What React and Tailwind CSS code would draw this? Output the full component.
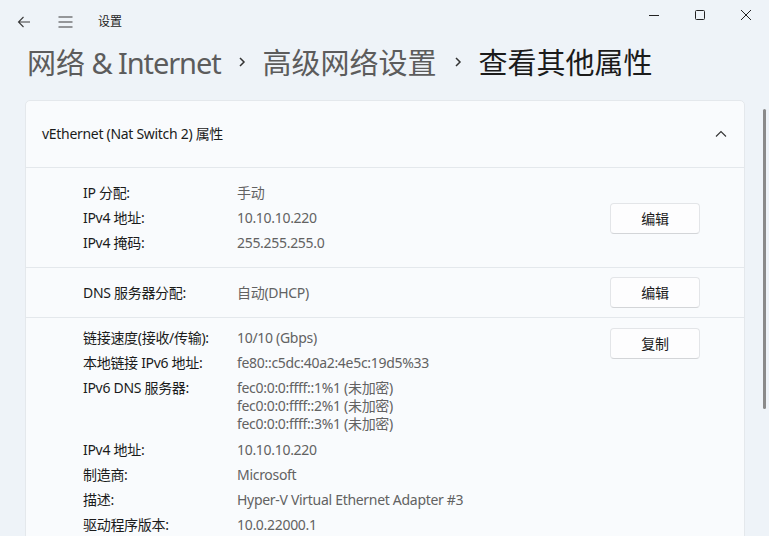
import React from "react";

const font = { fontFamily: '"Noto Sans", "Noto Sans CJK SC", sans-serif' };

function Btn({ children }) {
  return (
    <button className="w-[90px] h-[31px] rounded-[4px] border border-[#e3e5e8] border-b-[#d3d5d8] bg-[#fdfdfe] text-[14px] text-[#1b1b1b] leading-none">
      {children}
    </button>
  );
}

function Row({ label, children, className = "" }) {
  return (
    <div className={"flex " + className}>
      <div className="w-[154px] text-[#1b1b1b]">{label}</div>
      <div className="text-[#626262]">{children}</div>
    </div>
  );
}

function Chevron() {
  return (
    <svg className="mx-[16px]" width="10" height="14" viewBox="0 0 10 14" fill="none" stroke="#333" strokeWidth="1.5">
      <path d="M3 3l4 4-4 4" />
    </svg>
  );
}

export default function App() {
  return (
    <div className="relative w-[769px] h-[536px] overflow-hidden bg-[#eef3f8]" style={font}>
      {/* title bar */}
      <div className="flex items-center h-[44px]">
        <div className="w-[46px] flex justify-center pl-[1px]">
          <svg width="14" height="12" viewBox="0 0 14 12" fill="none" stroke="#3a3a3a" strokeWidth="1.1">
            <path d="M13 6H1.5M6.5 1L1.5 6l5 5" />
          </svg>
        </div>
        <div className="w-[38px] flex justify-center">
          <svg width="15" height="12" viewBox="0 0 15 12" fill="none" stroke="#3a3a3a" strokeWidth="1.1">
            <path d="M0.5 1h14M0.5 6h14M0.5 11h14" />
          </svg>
        </div>
        <div className="ml-[14px] text-[12px] text-[#1b1b1b] mt-[-1px]">设置</div>
        <div className="ml-auto flex items-center self-start h-[30px]">
          <div className="w-[46px] flex justify-center">
            <svg width="10" height="10" viewBox="0 0 10 10" stroke="#222" strokeWidth="1"><path d="M0 5.5h10" /></svg>
          </div>
          <div className="w-[46px] flex justify-center">
            <svg width="10" height="10" viewBox="0 0 10 10" fill="none" stroke="#222" strokeWidth="1"><rect x="0.5" y="0.5" width="9" height="9" rx="1" /></svg>
          </div>
          <div className="w-[46px] flex justify-center">
            <svg width="10" height="10" viewBox="0 0 10 10" stroke="#222" strokeWidth="1"><path d="M0 0l10 10M10 0L0 10" /></svg>
          </div>
        </div>
      </div>

      {/* breadcrumb */}
      <div className="flex items-center h-[36px] pl-[27px] text-[29px] leading-none text-[#5c5c5c]">
        <span>网络<span className="tracking-[-1.1px]"> &amp; Internet</span></span>
        <Chevron />
        <span>高级网络设置</span>
        <Chevron />
        <span className="text-[#1b1b1b]">查看其他属性</span>
      </div>

      {/* card */}
      <div className="ml-[25px] mr-[24px] mt-[20px] rounded-[5px] border border-[#e4e8ec] bg-[#f9fbfd] text-[14px] leading-[18px] tracking-[-0.3px]">
        <div className="flex items-center h-[67px] pl-[16px] pr-[17px] border-b border-[#e4e8ec] text-[#1b1b1b]">
          <span>vEthernet (Nat Switch 2) 属性</span>
          <svg className="ml-auto" width="12" height="8" viewBox="0 0 12 8" fill="none" stroke="#333" strokeWidth="1.1"><path d="M1 6.5L6 1.5l5 5" /></svg>
        </div>

        <div className="flex pl-[57px] pr-[44px] pt-[16px] pb-[15px] border-b border-[#e4e8ec]">
          <div className="flex flex-col gap-[7px]">
            <Row label="IP 分配:">手动</Row>
            <Row label="IPv4 地址:">10.10.10.220</Row>
            <Row label="IPv4 掩码:">255.255.255.0</Row>
          </div>
          <div className="ml-auto pt-[19px]"><Btn>编辑</Btn></div>
        </div>

        <div className="flex items-center h-[50px] pl-[57px] pr-[44px] border-b border-[#e4e8ec]">
          <div className="pt-[1px]"><Row label="DNS 服务器分配:">自动(DHCP)</Row></div>
          <div className="ml-auto"><Btn>编辑</Btn></div>
        </div>

        <div className="flex pl-[57px] pr-[44px] pt-[10px] pb-[20px]">
          <div className="flex flex-col gap-[7px] pt-[1px]">
            <Row label="链接速度(接收/传输):">10/10 (Gbps)</Row>
            <Row label="本地链接 IPv6 地址:">fe80::c5dc:40a2:4e5c:19d5%33</Row>
            <Row label="IPv6 DNS 服务器:">
              <div>fec0:0:0:ffff::1%1 (未加密)</div>
              <div>fec0:0:0:ffff::2%1 (未加密)</div>
              <div>fec0:0:0:ffff::3%1 (未加密)</div>
            </Row>
            <Row label="IPv4 地址:" className="mt-[1px]">10.10.10.220</Row>
            <Row label="制造商:">Microsoft</Row>
            <Row label="描述:">Hyper-V Virtual Ethernet Adapter #3</Row>
            <Row label="驱动程序版本:">10.0.22000.1</Row>
          </div>
          <div className="ml-auto"><Btn>复制</Btn></div>
        </div>
      </div>

      {/* scrollbar */}
      <div className="absolute left-[763px] top-[109px] w-[3px] h-[300px] rounded-full bg-[#8a8a8a]" />
    </div>
  );
}
